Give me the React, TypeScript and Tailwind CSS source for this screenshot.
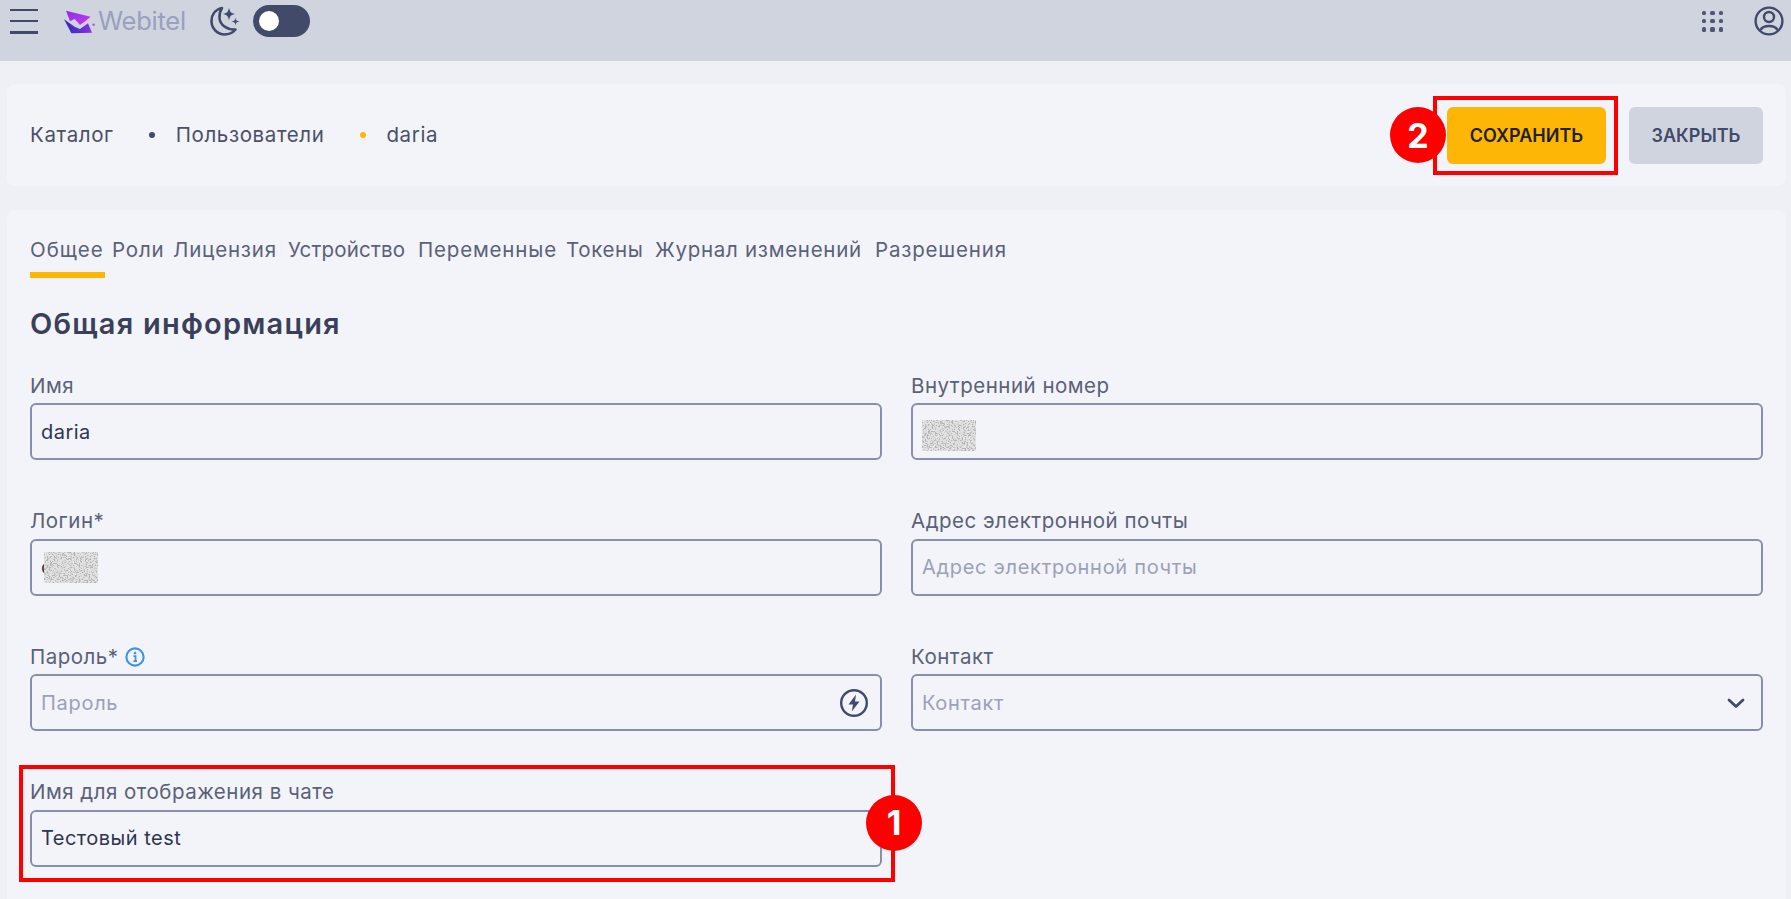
const font = "font-['Inter','Liberation_Sans',sans-serif]";

function Logo() {
  return (
    <svg width="33" height="25" viewBox="25 25 99 75" fill="none" aria-hidden>
      <defs>
        <linearGradient id="logoTop" x1="0" y1="0" x2="1" y2="1">
          <stop offset="0" stopColor="#8a2de8" />
          <stop offset="1" stopColor="#cc3cf0" />
        </linearGradient>
        <linearGradient id="logoBottom" x1="0" y1="0" x2="1" y2="0">
          <stop offset="0" stopColor="#2d2bb8" />
          <stop offset="1" stopColor="#8a35e0" />
        </linearGradient>
      </defs>
      <path d="M34 30L108 48L92 62L76 73L60 55L46 62Z" fill="url(#logoTop)" />
      <path d="M28 56L60 78L76 85L100 68L112 96L50 98Z" fill="url(#logoBottom)" />
      <circle cx="117" cy="72" r="3.5" fill="#a64be8" />
    </svg>
  );
}

function MoonIcon() {
  return (
    <svg width="30" height="30" viewBox="0 0 30 30" fill="none" aria-hidden className="text-[#414a68]">
      <path
        d="M12 2C5 3.5 1.5 9 1.5 15C1.5 23 8 28.5 14.5 28.5C19 28.5 23 26.5 25.5 23.5C17 24 10 19 9.5 12C9.3 8.5 10 5 12 2Z"
        stroke="currentColor"
        strokeWidth="2.6"
        strokeLinejoin="round"
      />
      <path d="M19 1.5C19.7 6 21 7.3 25.5 8C21 8.7 19.7 10 19 14.5C18.3 10 17 8.7 12.5 8C17 7.3 18.3 6 19 1.5Z" fill="currentColor" />
      <path d="M25.5 11.5C26 14.5 26.5 15 29.5 15.5C26.5 16 26 16.5 25.5 19.5C25 16.5 24.5 16 21.5 15.5C24.5 15 25 14.5 25.5 11.5Z" fill="currentColor" />
    </svg>
  );
}

function GridIcon() {
  const dots = [0, 1, 2, 3, 4, 5, 6, 7, 8];
  return (
    <div className="grid h-[21px] w-[21px] grid-cols-3 gap-[4px]">
      {dots.map((d) => (
        <span key={d} className="rounded-[1.5px] bg-[#4f5775]" />
      ))}
    </div>
  );
}

function UserIcon() {
  return (
    <svg width="30" height="30" viewBox="0 0 30 30" fill="none" aria-hidden className="text-[#414a68]">
      <circle cx="15" cy="15" r="13.4" stroke="currentColor" strokeWidth="2.4" />
      <circle cx="15" cy="11" r="5" stroke="currentColor" strokeWidth="2.4" />
      <path d="M6.5 24C8 21 11 20 15 20C19 20 22 21 23.5 24" stroke="currentColor" strokeWidth="2.4" />
    </svg>
  );
}

function InfoIcon() {
  return (
    <svg width="20" height="20" viewBox="0 0 19 19" fill="none" aria-hidden className="text-[#3f93e2]">
      <circle cx="9.5" cy="9.5" r="8.2" stroke="currentColor" strokeWidth="2" />
      <circle cx="9.5" cy="5.8" r="1.3" fill="currentColor" />
      <path d="M8 8.6H10V13.4M8 13.4H11.4" stroke="currentColor" strokeWidth="1.7" />
    </svg>
  );
}

function GenerateIcon() {
  return (
    <svg width="30" height="30" viewBox="0 0 30 30" fill="none" aria-hidden className="text-[#414a68]">
      <circle cx="15" cy="15" r="12.8" stroke="currentColor" strokeWidth="2.4" />
      <path d="M17 6.5L9.5 16.5H14L12.8 23.5L20.5 13.5H16Z" fill="currentColor" />
    </svg>
  );
}

function ChevronIcon() {
  return (
    <svg width="20" height="14" viewBox="0 0 20 14" fill="none" aria-hidden className="text-[#414a68]">
      <path d="M3 4L10 10.5L17 4" stroke="currentColor" strokeWidth="2.8" strokeLinecap="round" strokeLinejoin="round" />
    </svg>
  );
}

// blurred-out value in the screenshot
function NoisePatch({ id }: { id: string }) {
  return (
    <svg width="54" height="31" aria-hidden className="absolute">
      <filter id={id} x="0" y="0" width="100%" height="100%">
        <feTurbulence type="fractalNoise" baseFrequency="0.6" numOctaves="2" seed="4" />
        <feColorMatrix values="0 0 0 0 0.45  0 0 0 0 0.45  0 0 0 0 0.45  4 4 0 0 -3.9" />
      </filter>
      <rect width="54" height="31" fill="#e2e2e2" />
      <rect width="54" height="31" filter={`url(#${id})`} />
    </svg>
  );
}

function Badge({ n, className }: { n: number; className: string }) {
  return (
    <span
      className={`absolute z-10 flex h-14 w-14 items-center justify-center rounded-full bg-[#ff0000] text-[34px] font-bold text-white ${className}`}
    >
      {n}
    </span>
  );
}

function Field({
  label,
  value,
  placeholder,
  after,
  children,
}: {
  label: string;
  value?: string;
  placeholder?: string;
  after?: React.ReactNode;
  children?: React.ReactNode;
}) {
  return (
    <div className="relative flex flex-col">
      <div className="flex h-[24px] translate-y-px items-center gap-[6px] text-[20.5px] leading-none tracking-[0.024em] text-[#5a6178]">
        {label}
        {after}
      </div>
      <div className="relative mt-[6px] flex h-[57px] items-center rounded-[6px] border-2 border-[#878fab]">
        <input
          readOnly
          value={value ?? ""}
          placeholder={placeholder}
          className="h-full w-full bg-transparent pr-12 pl-[9px] tracking-[0.024em] text-[#2f3550] outline-none placeholder:tracking-[0.035em] placeholder:text-[#9aa1b8]"
        />
        {children}
      </div>
    </div>
  );
}

const tabs = [
  { label: "Общее", w: "w-[82px]", track: "tracking-[0.05em]" },
  { label: "Роли", w: "w-[61px]", track: "tracking-[0.04em]" },
  { label: "Лицензия", w: "w-[115px]", track: "tracking-[0.04em]" },
  { label: "Устройство", w: "w-[130px]", track: "tracking-[0.01em]" },
  { label: "Переменные", w: "w-[148px]", track: "tracking-[0.04em]" },
  { label: "Токены", w: "w-[89px]", track: "tracking-[0.03em]" },
  { label: "Журнал изменений", w: "w-[220px]", track: "tracking-[0.035em]" },
  { label: "Разрешения", w: "w-[131px]", track: "tracking-[0.04em]" },
];

export default function App() {
  return (
    <div className={`${font} flex h-[899px] flex-col overflow-hidden bg-[#eef0f5] text-[20px]`}>
      <header className="flex h-[61px] shrink-0 items-center bg-[#d0d4df] pr-[7px] pb-[19px] pl-[10px]">
        <button className="flex h-[25px] w-[28px] flex-col justify-between">
          <span className="h-[2.5px] w-full bg-[#414a68]" />
          <span className="h-[2.5px] w-full bg-[#414a68]" />
          <span className="h-[2.5px] w-full bg-[#414a68]" />
        </button>
        <div className="ml-[25px] flex items-center">
          <Logo />
          <span className="ml-[2px] text-[25.5px] leading-none tracking-[-0.01em] text-[#98a1bd]">Webitel</span>
        </div>
        <div className="ml-[24px]">
          <MoonIcon />
        </div>
        <div className="ml-[13px] flex h-[32px] w-[57px] items-center rounded-full bg-[#414a68] pl-[6px]">
          <span className="h-[20px] w-[20px] rounded-full bg-white" />
        </div>
        <div className="ml-auto flex items-center gap-[31px]">
          <GridIcon />
          <UserIcon />
        </div>
      </header>

      <main className="flex flex-1 flex-col pr-[5px] pl-[7px]">
        <section className="mt-[23px] flex h-[102px] shrink-0 items-center rounded-[8px] bg-[#f3f4f9] px-[23px] text-[20.5px] tracking-[0.03em] text-[#4a5068]">
          <span>Каталог</span>
          <span className="mr-[21px] ml-[35px] h-[6px] w-[6px] rounded-full bg-[#414a68]" />
          <span>Пользователи</span>
          <span className="mr-[20px] ml-[36px] h-[6px] w-[6px] rounded-full bg-[#fdb606]" />
          <span>daria</span>
          <div className="ml-auto flex items-center gap-[23px] text-[18px] font-semibold tracking-normal">
            <div className="relative">
              <span className="absolute -top-[11px] -right-[12px] -bottom-[11px] -left-[14px] border-4 border-[#ff0000]" />
              <Badge n={2} className="top-[0.5px] -left-[57px]" />
              <button className="relative flex h-[57px] w-[159px] items-center justify-center rounded-[6px] bg-[#fdb606] text-[#1f2024]">
                СОХРАНИТЬ
              </button>
            </div>
            <button className="flex h-[57px] w-[134px] items-center justify-center rounded-[6px] bg-[#d0d4df] text-[#414a68]">
              ЗАКРЫТЬ
            </button>
          </div>
        </section>

        <section className="mt-[24px] flex-1 rounded-t-[8px] bg-[#f3f4f9] px-[23px]">
          <nav className="flex h-[68px] items-start pt-[26px] text-[20.5px] text-[#5a6178]">
            {tabs.map((tab, i) => (
              <div key={tab.label} className={`relative flex h-[42px] shrink-0 flex-col ${tab.w} ${tab.track}`}>
                <span className="leading-[28px] whitespace-nowrap">{tab.label}</span>
                {i === 0 && <span className="absolute bottom-0 left-0 h-[6px] w-[75px] bg-[#fdb606]" />}
              </div>
            ))}
          </nav>
          <h2 className="mt-[29px] text-[29px] leading-[34px] font-semibold tracking-[0.042em] text-[#3a4059]">
            Общая информация
          </h2>
          <div className="mt-[32px] grid grid-cols-2 gap-x-[29px] gap-y-[48.5px]">
            <Field label="Имя" value="daria" />
            <Field label="Внутренний номер">
              <span className="absolute top-[15px] left-[9px]">
                <NoisePatch id="noise-a" />
              </span>
            </Field>
            <Field label="Логин*" value="c">
              <span className="absolute top-[11px] left-[12px]">
                <NoisePatch id="noise-b" />
              </span>
            </Field>
            <Field label="Адрес электронной почты" placeholder="Адрес электронной почты" />
            <Field label="Пароль*" placeholder="Пароль" after={<InfoIcon />}>
              <span className="absolute right-[11px] flex">
                <GenerateIcon />
              </span>
            </Field>
            <Field label="Контакт" placeholder="Контакт">
              <span className="absolute right-[15px] flex">
                <ChevronIcon />
              </span>
            </Field>
            <div className="relative">
              <span className="absolute -top-[15px] -right-[13px] -bottom-[15px] -left-[11px] border-4 border-[#ff0000]" />
              <Badge n={1} className="top-[15px] -right-[40px]" />
              <Field label="Имя для отображения в чате" value="Тестовый test" />
            </div>
          </div>
        </section>
      </main>
    </div>
  );
}
